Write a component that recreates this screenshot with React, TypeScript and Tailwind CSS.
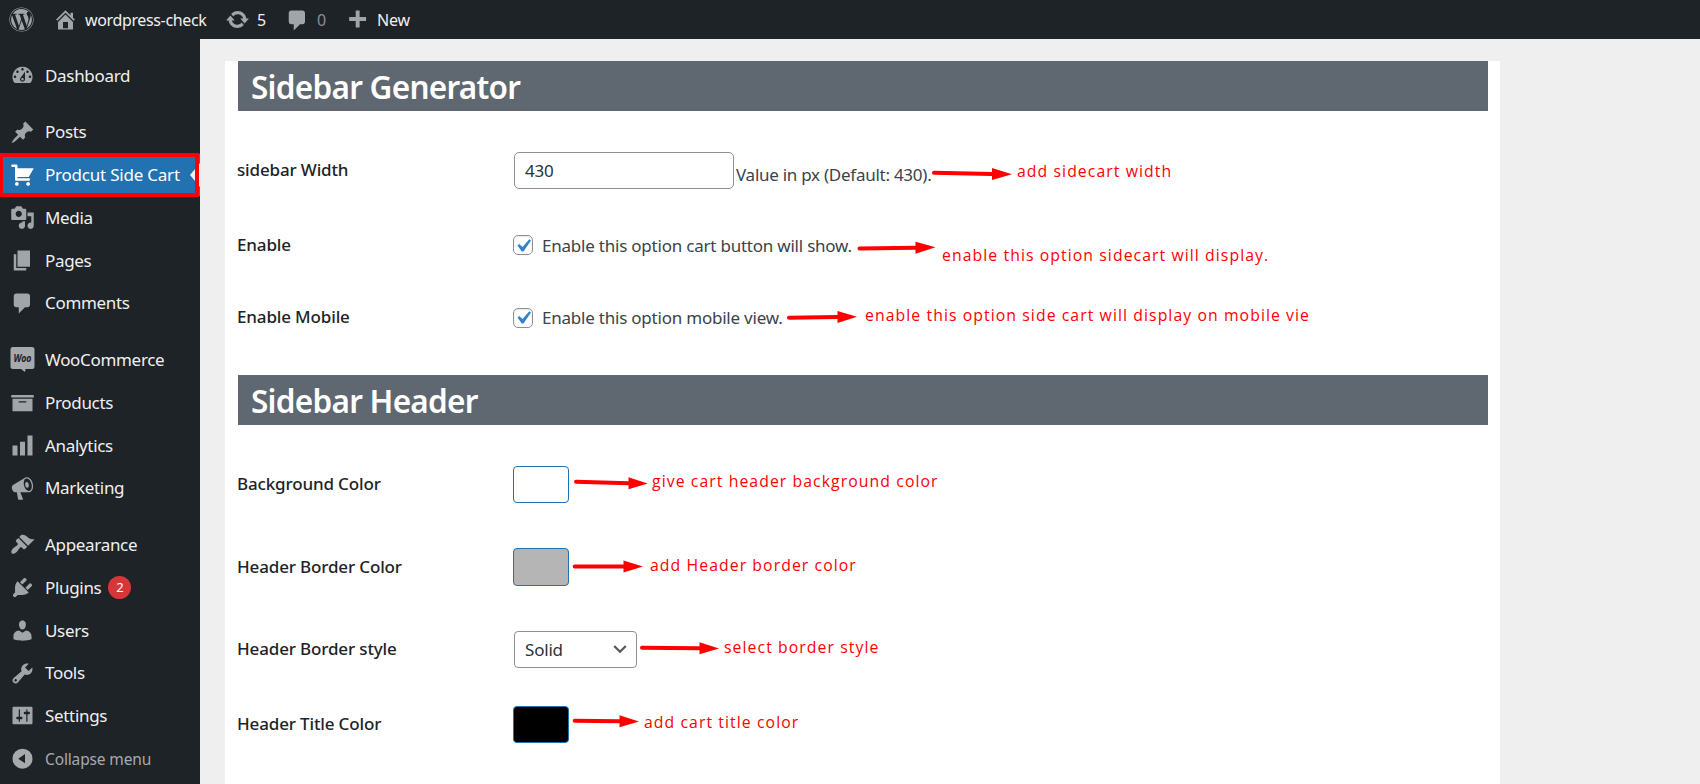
import type { ReactNode } from "react";
import { FaWordpress } from "react-icons/fa";

const icons = {
  home: "M16 8.5l1.53 1.53-1.06 1.06L10 4.6l-6.47 6.49-1.06-1.06L10 2.5l4 4v-2h2v4zm-6-2.46l6 5.99V18H4v-5.97zM12 17v-5H8v5h4z",
  update:
    "M10.2 3.28c3.53 0 6.43 2.61 6.92 6h2.08l-3.5 4-3.5-4h2.32c-.45-1.97-2.21-3.45-4.32-3.45-1.45 0-2.73.71-3.54 1.78L4.95 5.66C6.23 4.2 8.11 3.28 10.2 3.28zm-.4 13.44c-3.52 0-6.43-2.61-6.92-6H.8l3.5-4c1.17 1.33 2.33 2.67 3.5 4H5.48c.45 1.97 2.21 3.45 4.32 3.45 1.45 0 2.73-.71 3.54-1.78l1.71 1.95c-1.28 1.46-3.15 2.38-5.25 2.38z",
  plus: "M17 7v3h-5v5H9v-5H4V7h5V2h3v5h5z",
  dashboard:
    "M3.76 16h12.48A7.998 7.998 0 0 0 10 3a7.998 7.998 0 0 0-6.24 13zM10 4c.55 0 1 .45 1 1s-.45 1-1 1-1-.45-1-1 .45-1 1-1zM6 6c.55 0 1 .45 1 1s-.45 1-1 1-1-.45-1-1 .45-1 1-1zm8 0c.55 0 1 .45 1 1s-.45 1-1 1-1-.45-1-1 .45-1 1-1zm-5.37 5.55L12 7v6c0 1.1-.9 2-2 2s-2-.9-2-2c0-.57.24-1.08.63-1.45zM4 10c.55 0 1 .45 1 1s-.45 1-1 1-1-.45-1-1 .45-1 1-1zm12 0c.55 0 1 .45 1 1s-.45 1-1 1-1-.45-1-1 .45-1 1-1zm-5 3c0-.55-.45-1-1-1s-1 .45-1 1 .45 1 1 1 1-.45 1-1z",
  pin: "M10.44 3.02l1.82-1.82 6.36 6.35-1.83 1.82c-1.05-.68-2.48-.57-3.41.36l-.75.75c-.92.93-1.04 2.35-.35 3.41l-1.83 1.82-2.41-2.41-2.8 2.79c-.42.42-3.38 2.71-3.8 2.29s1.86-3.39 2.28-3.81l2.79-2.79L4.1 9.36l1.83-1.82c1.05.69 2.48.57 3.4-.36l.75-.75c.93-.92 1.05-2.35.36-3.41z",
  cart: "M6 13h9c.55 0 1 .45 1 1s-.45 1-1 1H5c-.55 0-1-.45-1-1V4H2c-.55 0-1-.45-1-1s.45-1 1-1h3c.55 0 1 .45 1 1v2h13l-4 7H6v1zm-.5 3c.83 0 1.5.67 1.5 1.5S6.33 19 5.5 19 4 18.33 4 17.5 4.67 16 5.5 16zm9 0c.83 0 1.5.67 1.5 1.5s-.67 1.5-1.5 1.5-1.5-.67-1.5-1.5.67-1.5 1.5-1.5z",
  media:
    "M13 11V4c0-.55-.45-1-1-1h-1.67L9 1H5L3.67 3H2c-.55 0-1 .45-1 1v7c0 .55.45 1 1 1h10c.55 0 1-.45 1-1zM7 4.5c1.38 0 2.5 1.12 2.5 2.5S8.38 9.5 7 9.5 4.5 8.38 4.5 7 5.62 4.5 7 4.5zM14 6h5v10.5c0 1.38-1.12 2.5-2.5 2.5S14 17.88 14 16.5s1.12-2.5 2.5-2.5c.17 0 .34.02.5.05V9h-3V6zm-4 8.05V13h2v3.5c0 1.38-1.12 2.5-2.5 2.5S7 17.88 7 16.5 8.12 14 9.5 14c.17 0 .34.02.5.05z",
  page: "M6 15V2h10v13H6zm-1 1h8v2H3V5h2v11z",
  comments: "M5 2h9c1.1 0 2 .9 2 2v7c0 1.1-.9 2-2 2h-2l-5 5v-5H5c-1.1 0-2-.9-2-2V4c0-1.1.9-2 2-2z",
  archive: "M19 4v2H1V4h18zM2 7h16v10H2V7zm11 3V9H7v1h6z",
  chart: "M18 18V2h-4v16h4zm-6 0V7H8v11h4zm-6 0v-8H2v8h4z",
  megaphone:
    "M18.15 5.94c.46 1.62.38 3.22-.02 4.48-.42 1.28-1.26 2.18-2.3 2.48-.16.06-.26.06-.4.06-.06.02-.12.02-.18.02-.06.02-.14.02-.22.02h-6.8l2.22 5.5c.02.14-.06.26-.14.34-.08.1-.24.16-.34.16H6.95c-.1 0-.26-.06-.34-.16-.08-.08-.16-.2-.14-.34l-1-5.5H4.25l-.02-.02c-.5.06-1.08-.18-1.54-.62s-.88-1.08-1.06-1.88c-.24-.8-.2-1.56-.02-2.2.18-.62.58-1.08 1.06-1.3l.02-.02 9-5.4c.1-.06.18-.1.24-.16.06-.04.14-.08.24-.12.16-.08.28-.12.5-.18 1.04-.3 2.24.1 3.22.98s1.84 2.24 2.26 3.86zm-2.58 5.98h-.02c.4-.1.74-.34 1.04-.7.58-.7.86-1.76.86-3.04 0-.64-.1-1.3-.28-1.98-.34-1.36-1.02-2.5-1.78-3.24s-1.68-1.1-2.46-.88c-.82.22-1.4.96-1.7 2-.32 1.04-.28 2.36.06 3.72.38 1.36 1 2.5 1.8 3.24.78.74 1.62 1.1 2.48.88zm-2.54-7.08c.22-.04.42-.02.62.04.38.16.76.48 1.02 1s.42 1.2.42 1.78c0 .3-.04.56-.12.8-.18.48-.44.84-.86.94-.34.1-.8-.06-1.14-.4s-.64-.86-.78-1.5c-.18-.62-.12-1.24.02-1.72s.48-.84.82-.94z",
  appearance:
    "M14.48 11.06L7.41 3.99l1.5-1.5c.5-.56 2.3-.47 3.51.32 1.21.8 1.43 1.28 2.91 2.1 1.18.64 2.45 1.26 4.45.85zm-.71.71L6.7 4.7 4.93 6.47c-.39.39-.39 1.02 0 1.41l1.06 1.06c.39.39.39 1.03 0 1.42-.6.6-1.43 1.11-2.21 1.69-.35.26-.7.53-1.01.84C1.43 14.23.4 16.08 1.4 17.07c.99 1 2.84-.03 4.18-1.36.31-.31.58-.66.85-1.02.57-.78 1.08-1.61 1.69-2.21.39-.39 1.02-.39 1.41 0l1.06 1.06c.39.39 1.02.39 1.41 0z",
  plugins:
    "M13.11 4.36L9.87 7.6 8 5.73l3.24-3.24c.35-.34 1.05-.2 1.56.32.52.51.66 1.21.31 1.55zm-8 1.77l.91-1.12 9.01 9.01-1.19.84c-.71.71-2.63 1.16-3.82 1.16H6.14L4.9 17.26c-.59.59-1.54.59-2.12 0-.59-.58-.59-1.53 0-2.12l1.24-1.24v-3.88c0-1.13.4-3.19 1.09-3.89zm7.26 3.97l3.24-3.24c.34-.35 1.04-.21 1.55.31.52.51.66 1.21.31 1.55l-3.24 3.25z",
  users:
    "M10 9.25c-2.27 0-2.73-3.44-2.73-3.44C7 4.02 7.82 2 9.97 2c2.16 0 2.98 2.02 2.71 3.81 0 0-.41 3.44-2.68 3.44zm0 2.57L12.72 10c2.39 0 4.52 2.33 4.52 4.53v2.49s-3.65 1.13-7.24 1.13c-3.65 0-7.24-1.13-7.24-1.13v-2.49c0-2.25 1.94-4.48 4.47-4.48z",
  tools:
    "M16.68 9.77c-1.34 1.34-3.3 1.67-4.95.99l-5.41 6.52c-.99.99-2.59.99-3.58 0s-.99-2.59 0-3.57l6.52-5.42c-.68-1.65-.35-3.61.99-4.95 1.28-1.28 3.12-1.62 4.72-1.06l-2.89 2.89 2.82 2.82 2.86-2.87c.53 1.58.18 3.39-1.08 4.65zM3.81 16.21c.4.39 1.04.39 1.43 0 .4-.4.4-1.04 0-1.43-.39-.4-1.03-.4-1.43 0-.39.39-.39 1.03 0 1.43z",
  settings:
    "M18 16V4c0-.55-.45-1-1-1H3c-.55 0-1 .45-1 1v12c0 .55.45 1 1 1h14c.55 0 1-.45 1-1zM8 11h1c.55 0 1 .45 1 1s-.45 1-1 1H8v1.5c0 .28-.22.5-.5.5s-.5-.22-.5-.5V13H6c-.55 0-1-.45-1-1s.45-1 1-1h1V5.5c0-.28.22-.5.5-.5s.5.22.5.5V11zm5-2h-1c-.55 0-1-.45-1-1s.45-1 1-1h1V5.5c0-.28.22-.5.5-.5s.5.22.5.5V7h1c.55 0 1 .45 1 1s-.45 1-1 1h-1v5.5c0 .28-.22.5-.5.5s-.5-.22-.5-.5V9z",
  collapse: "M10 2.100a8 8 0 1 1 0 16 8 8 0 0 1 0-16zM12 6.400L6.600 10.100 12 13.800V6.400z",
  check: "M14.83 4.89l1.34.94-5.81 8.38H9.02L5.78 9.67l1.34-1.25 2.57 2.4z",
};

function Icon({ name, className = "size-[25px]" }: { name: keyof typeof icons; className?: string }) {
  return (
    <svg viewBox="0 0 20 20" className={`shrink-0 fill-current ${className}`}>
      <path fillRule="evenodd" d={icons[name]} />
    </svg>
  );
}

function WooIcon() {
  return (
    <svg viewBox="0 0 25 25" className="size-[25px] shrink-0">
      <path d="M3 0h19a2.500 2.500 0 0 1 2.500 2.500v17A2.500 2.500 0 0 1 22 22h-6.500l-.5 3-4-3H3a2.500 2.500 0 0 1-2.500-2.500v-17A2.500 2.500 0 0 1 3 0z" fill="#a7aaad" />
      <text x="12.500" y="14.500" textAnchor="middle" fontSize="10.500" fontWeight="700" fontStyle="italic" fontFamily="Noto Sans, sans-serif" textLength="18" lengthAdjust="spacingAndGlyphs" fill="#1d2327">
        Woo
      </text>
    </svg>
  );
}

type Item = { label: string; icon?: keyof typeof icons; gap?: boolean; current?: boolean; badge?: string };

const menu: Item[] = [
  { label: "Dashboard", icon: "dashboard" },
  { label: "Posts", icon: "pin", gap: true },
  { label: "Prodcut Side Cart", icon: "cart", current: true },
  { label: "Media", icon: "media" },
  { label: "Pages", icon: "page" },
  { label: "Comments", icon: "comments" },
  { label: "WooCommerce", gap: true },
  { label: "Products", icon: "archive" },
  { label: "Analytics", icon: "chart" },
  { label: "Marketing", icon: "megaphone" },
  { label: "Appearance", icon: "appearance", gap: true },
  { label: "Plugins", icon: "plugins", badge: "2" },
  { label: "Users", icon: "users" },
  { label: "Tools", icon: "tools" },
  { label: "Settings", icon: "settings" },
];

function MenuItem({ item }: { item: Item }) {
  return (
    <li className={`relative flex h-[42.75px] items-center ${item.gap ? "mt-[14px]" : ""} ${item.current ? "bg-[#2271b1] text-white" : "text-[#f0f0f1]"}`}>
      <span className={`flex w-[45px] justify-center ${item.current ? "text-white" : "text-[#a0a5aa]"}`}>
        {item.icon ? <Icon name={item.icon} /> : <WooIcon />}
      </span>
      <span className={`text-[17px] ${item.current ? "tracking-[-0.22px]" : "tracking-[-0.32px]"}`}>{item.label}</span>
      {item.badge && (
        <span className="ml-[7px] flex size-[23px] items-center justify-center rounded-full bg-[#d63638] text-[13px] text-white">{item.badge}</span>
      )}
      {item.current && (
        <>
          <span className="absolute right-0 h-[24px] w-[10px] bg-[#f0f0f1] [clip-path:polygon(100%_0,0_50%,100%_100%)]" />
          <span className="absolute -top-[1px] -left-[1px] h-[44px] w-[200px] border-4 border-[#fe0000]" />
        </>
      )}
    </li>
  );
}

function SectionTitle({ children }: { children: ReactNode }) {
  return (
    <h1 className="flex h-[50px] items-center bg-[#5f6871] pl-[13px] text-[31.500px] font-semibold tracking-[-0.73px] text-white">
      <span className="pt-px">{children}</span>
    </h1>
  );
}

function Row({ label, className, children }: { label: string; className: string; children: ReactNode }) {
  return (
    <div className={`flex items-center ${className}`}>
      <div className="-ml-px w-[276px] pb-px text-[17px] font-medium tracking-[-0.15px] text-[#1d2327]">{label}</div>
      {children}
    </div>
  );
}

function Check({ children }: { children: ReactNode }) {
  return (
    <label className="flex items-center gap-[9px] text-[17px] tracking-[-0.22px] text-[#3c434a]">
      <span className="flex size-[20px] items-center justify-center rounded-[5px] border border-[#8c8f94] bg-white text-[#3582c4] shadow-[inset_0_1px_2px_rgba(0,0,0,0.1)]">
        <Icon name="check" className="-ml-px mt-px size-[26px]" />
      </span>
      <span className="pt-px">{children}</span>
    </label>
  );
}

function Swatch({ className }: { className: string }) {
  return <span className={`w-14 rounded-[4px] border border-[#2271b1] ${className}`} />;
}

/* Arrow from (x1,y1) through the head base (x2,y2) to the tip (x3,y3). */
const arrows = [
  [934, 172.7, 992, 174, 1012, 174.3],
  [859.5, 248.500, 915.500, 247.700, 935.500, 247.300],
  [789, 317.7, 837.5, 317, 857, 316.7],
  [576, 481.7, 628.5, 483.3, 647.7, 483.5],
  [574.7, 566.6, 623.5, 566.6, 643, 566.6],
  [642, 647.7, 699.5, 648.3, 719, 648.5],
  [574.7, 720.7, 619.5, 721.3, 639, 721.5],
];

const notes = [
  { text: "add sidecart width", at: "left-[1017px] top-[159px]" },
  { text: "enable this option sidecart will display.", at: "left-[942px] top-[243px]" },
  { text: "enable this option side cart will display on mobile vie", at: "left-[865px] top-[303px]" },
  { text: "give cart header background color", at: "left-[652px] top-[469px]" },
  { text: "add Header border color", at: "left-[650px] top-[553px]" },
  { text: "select border style", at: "left-[724px] top-[635px]" },
  { text: "add cart title color", at: "left-[644px] top-[710px]" },
];

export default function App() {
  return (
    <div className="relative flex h-[784px] w-[1700px] flex-col overflow-hidden bg-[#efefef] font-['Noto_Sans',sans-serif]">
      <header className="flex h-[39px] shrink-0 items-center bg-[#1d2327] text-[16px] tracking-[-0.2px] text-[#f0f0f1]">
        <FaWordpress className="ml-[9px] size-[25px] text-[#a0a5aa]" />
        <Icon name="home" className="ml-[19px] size-[25px] text-[#a0a5aa]" />
        <span className="ml-[7px] w-[140px] pt-px tracking-[-0.36px]">wordpress-check</span>
        <Icon name="update" className="size-[25px] text-[#a0a5aa]" />
        <span className="ml-[7px] w-[28px] pt-px">5</span>
        <Icon name="comments" className="mt-px size-[25px] text-[#a0a5aa]" />
        <span className="ml-[7px] w-[26px] pt-px text-[#8c8f94]">0</span>
        <Icon name="plus" className="mt-[3px] ml-px size-[26px] text-[#a0a5aa]" />
        <span className="ml-[7px] pt-px">New</span>
      </header>

      <div className="flex min-h-0 flex-1">
        <nav className="w-[200px] shrink-0 bg-[#1d2327] pt-[15px]">
          <ul>
            {menu.map((item) => (
              <MenuItem key={item.label} item={item} />
            ))}
            <li className="flex h-[42.75px] items-center text-[#a7aaad]">
              <span className="flex w-[45px] justify-center">
                <Icon name="collapse" />
              </span>
              <span className="pt-px text-[15.500px] tracking-[-0.14px]">Collapse menu</span>
            </li>
          </ul>
        </nav>

        <main className="ml-[25px] mt-[22px] w-[1275px] bg-white pl-[13px] pr-[12px]">
          <SectionTitle>Sidebar Generator</SectionTitle>
          <Row label="sidebar Width" className="mt-[22px] h-[74px]">
            <span className="ml-px flex h-[37px] w-[220px] items-center rounded-[5px] border border-[#8c8f94] bg-white pl-[10px] pt-[2px] text-[17px] tracking-[-0.2px] text-[#2c3338]">430</span>
            <span className="ml-[2px] mt-[9px] text-[17px] tracking-[-0.26px] text-[#3c434a]">Value in px (Default: 430).</span>
          </Row>
          <Row label="Enable" className="h-[76px]">
            <Check>Enable this option cart button will show.</Check>
          </Row>
          <Row label="Enable Mobile" className="h-[69px]">
            <Check>Enable this option mobile view.</Check>
          </Row>
          <div className="mt-[23px]">
            <SectionTitle>Sidebar Header</SectionTitle>
          </div>
          <Row label="Background Color" className="mt-[18px] h-[83px]">
            <Swatch className="h-[37px] bg-white" />
          </Row>
          <Row label="Header Border Color" className="h-[82px]">
            <Swatch className="h-[38px] bg-[#b5b5b5]" />
          </Row>
          <Row label="Header Border style" className="h-[82px]">
            <span className="ml-px flex h-[37px] w-[123px] items-center justify-between rounded-[4px] border border-[#8c8f94] bg-white pl-[10px] pr-[9px] text-[17px] tracking-[-0.2px] text-[#2c3338]">
              <span className="pt-[2px]">Solid</span>
              <svg viewBox="0 0 14 10" className="h-[10px] w-[14px]">
                <path d="M1.200 2L7 7.800 12.800 2" fill="none" stroke="#50575e" strokeWidth="2.200" />
              </svg>
            </span>
          </Row>
          <Row label="Header Title Color" className="h-[69px]">
            <Swatch className="h-[37px] bg-black" />
          </Row>
        </main>
      </div>

      <div className="pointer-events-none absolute inset-0 font-['Open_Sans',sans-serif] text-[17px] leading-[24px] tracking-[1.15px] text-[#fe0000]">
        <svg viewBox="0 0 1700 784" className="absolute inset-0 h-full w-full">
          {arrows.map(([x1, y1, x2, y2, x3, y3]) => (
            <g key={y1} fill="#fe0000">
              <line x1={x1} y1={y1} x2={x2} y2={y2} stroke="#fe0000" strokeWidth="4" strokeLinecap="round" />
              <polygon points={`${x2},${y2 - 6} ${x3},${y3} ${x2},${y2 + 6}`} />
            </g>
          ))}
        </svg>
        {notes.map((n) => (
          <span key={n.text} className={`absolute origin-left scale-x-[0.929] whitespace-nowrap ${n.at}`}>
            {n.text}
          </span>
        ))}
      </div>
    </div>
  );
}
